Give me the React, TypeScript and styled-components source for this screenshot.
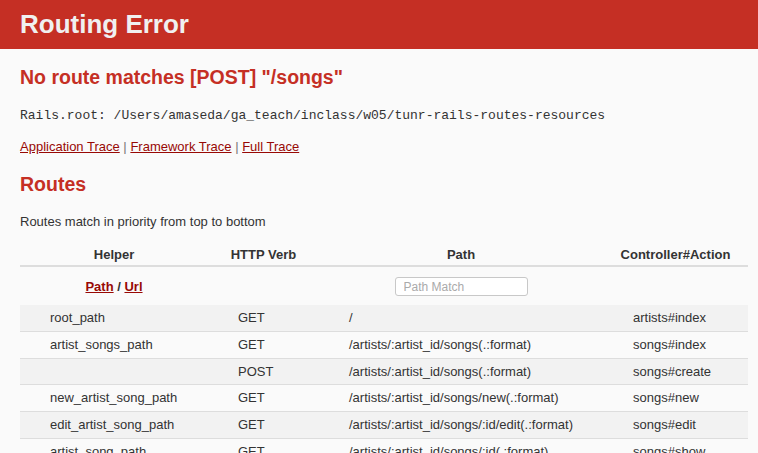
import React from "react";
import styled, { createGlobalStyle } from "styled-components";

const GlobalStyle = createGlobalStyle`
  body {
    margin: 0;
    background-color: #fafafa;
    color: #333;
    font-family: "Liberation Sans", Arial, sans-serif;
    font-size: 13px;
    line-height: 18px;
  }
`;

const Header = styled.header`
  background: #c52f24;
  color: #f0f0f0;
  height: 49px;
  padding: 0 20px;
  display: flex;
  align-items: center;
  box-sizing: border-box;
`;

const Title = styled.h1`
  margin: 0;
  font-size: 26px;
  line-height: 29px;
  font-weight: bold;
`;

const Container = styled.div`
  padding: 0 20px;
`;

const Heading = styled.h2`
  color: #c52f24;
  font-size: 19.5px;
  line-height: 25px;
  margin: 16px 0;
`;

const Para = styled.p`
  margin: 13px 0;
`;

const Code = styled.code`
  font-family: "Liberation Mono", "Courier New", monospace;
  font-size: 13px;
`;

const TraceLink = styled.a<{ $bold?: boolean }>`
  color: #980905;
  text-decoration: underline;
  font-weight: ${(p) => (p.$bold ? "bold" : "normal")};
  cursor: pointer;
`;

const Sep = styled.span`
  color: #777;
`;

const RouteTable = styled.table`
  border-collapse: collapse;
  table-layout: fixed;
  width: 728px;
  margin: 0;
`;

const HeadRow = styled.tr<{ $bottom?: boolean }>`
  border-bottom: ${(p) => (p.$bottom ? "none" : "2px solid #ddd")};
`;

const Th = styled.th<{ $filter?: boolean }>`
  font-weight: bold;
  text-align: center;
  padding: ${(p) => (p.$filter ? "10px 0 9px" : "2px 0 1px")};
  line-height: ${(p) => (p.$filter ? "19px" : "18px")};
`;

const Row = styled.tr`
  border-bottom: 1px solid #ddd;
  &:nth-child(odd) {
    background: #f2f2f2;
  }
`;

const Td = styled.td`
  padding: 4px 30px;
  line-height: 17.8px;
  white-space: nowrap;
  overflow: hidden;
`;

const SearchInput = styled.input`
  width: 133px;
  height: 19px;
  box-sizing: border-box;
  border: 1px solid #c8c8c8;
  border-radius: 3px;
  background: #fff;
  padding: 0 8px;
  font-family: "Liberation Sans", Arial, sans-serif;
  font-size: 12px;
  vertical-align: top;
  &::placeholder {
    color: #aaa;
  }
`;

const routes = [
  ["root_path", "GET", "/", "artists#index"],
  ["artist_songs_path", "GET", "/artists/:artist_id/songs(.:format)", "songs#index"],
  ["", "POST", "/artists/:artist_id/songs(.:format)", "songs#create"],
  ["new_artist_song_path", "GET", "/artists/:artist_id/songs/new(.:format)", "songs#new"],
  ["edit_artist_song_path", "GET", "/artists/:artist_id/songs/:id/edit(.:format)", "songs#edit"],
  ["artist_song_path", "GET", "/artists/:artist_id/songs/:id(.:format)", "songs#show"],
];

const App = () => (
  <>
    <GlobalStyle />
    <Header>
      <Title>Routing Error</Title>
    </Header>
    <Container>
      <Heading>No route matches [POST] "/songs"</Heading>
      <Para>
        <Code>Rails.root: /Users/amaseda/ga_teach/inclass/w05/tunr-rails-routes-resources</Code>
      </Para>
      <Para>
        <TraceLink>Application Trace</TraceLink> <Sep>|</Sep>{" "}
        <TraceLink>Framework Trace</TraceLink> <Sep>|</Sep>{" "}
        <TraceLink>Full Trace</TraceLink>
      </Para>
      <Heading>Routes</Heading>
      <Para>Routes match in priority from top to bottom</Para>
      <RouteTable>
        <colgroup>
          <col style={{ width: 188 }} />
          <col style={{ width: 111 }} />
          <col style={{ width: 284 }} />
          <col style={{ width: 145 }} />
        </colgroup>
        <thead>
          <HeadRow>
            <Th>Helper</Th>
            <Th>HTTP Verb</Th>
            <Th>Path</Th>
            <Th>Controller#Action</Th>
          </HeadRow>
          <HeadRow $bottom>
            <Th $filter>
              <TraceLink $bold>Path</TraceLink> / <TraceLink $bold>Url</TraceLink>
            </Th>
            <Th $filter></Th>
            <Th $filter>
              <SearchInput placeholder="Path Match" />
            </Th>
            <Th $filter></Th>
          </HeadRow>
        </thead>
        <tbody>
          {routes.map((r, i) => (
            <Row key={i}>
              {r.map((c, j) => (
                <Td key={j}>{c}</Td>
              ))}
            </Row>
          ))}
        </tbody>
      </RouteTable>
    </Container>
  </>
);

export default App;
